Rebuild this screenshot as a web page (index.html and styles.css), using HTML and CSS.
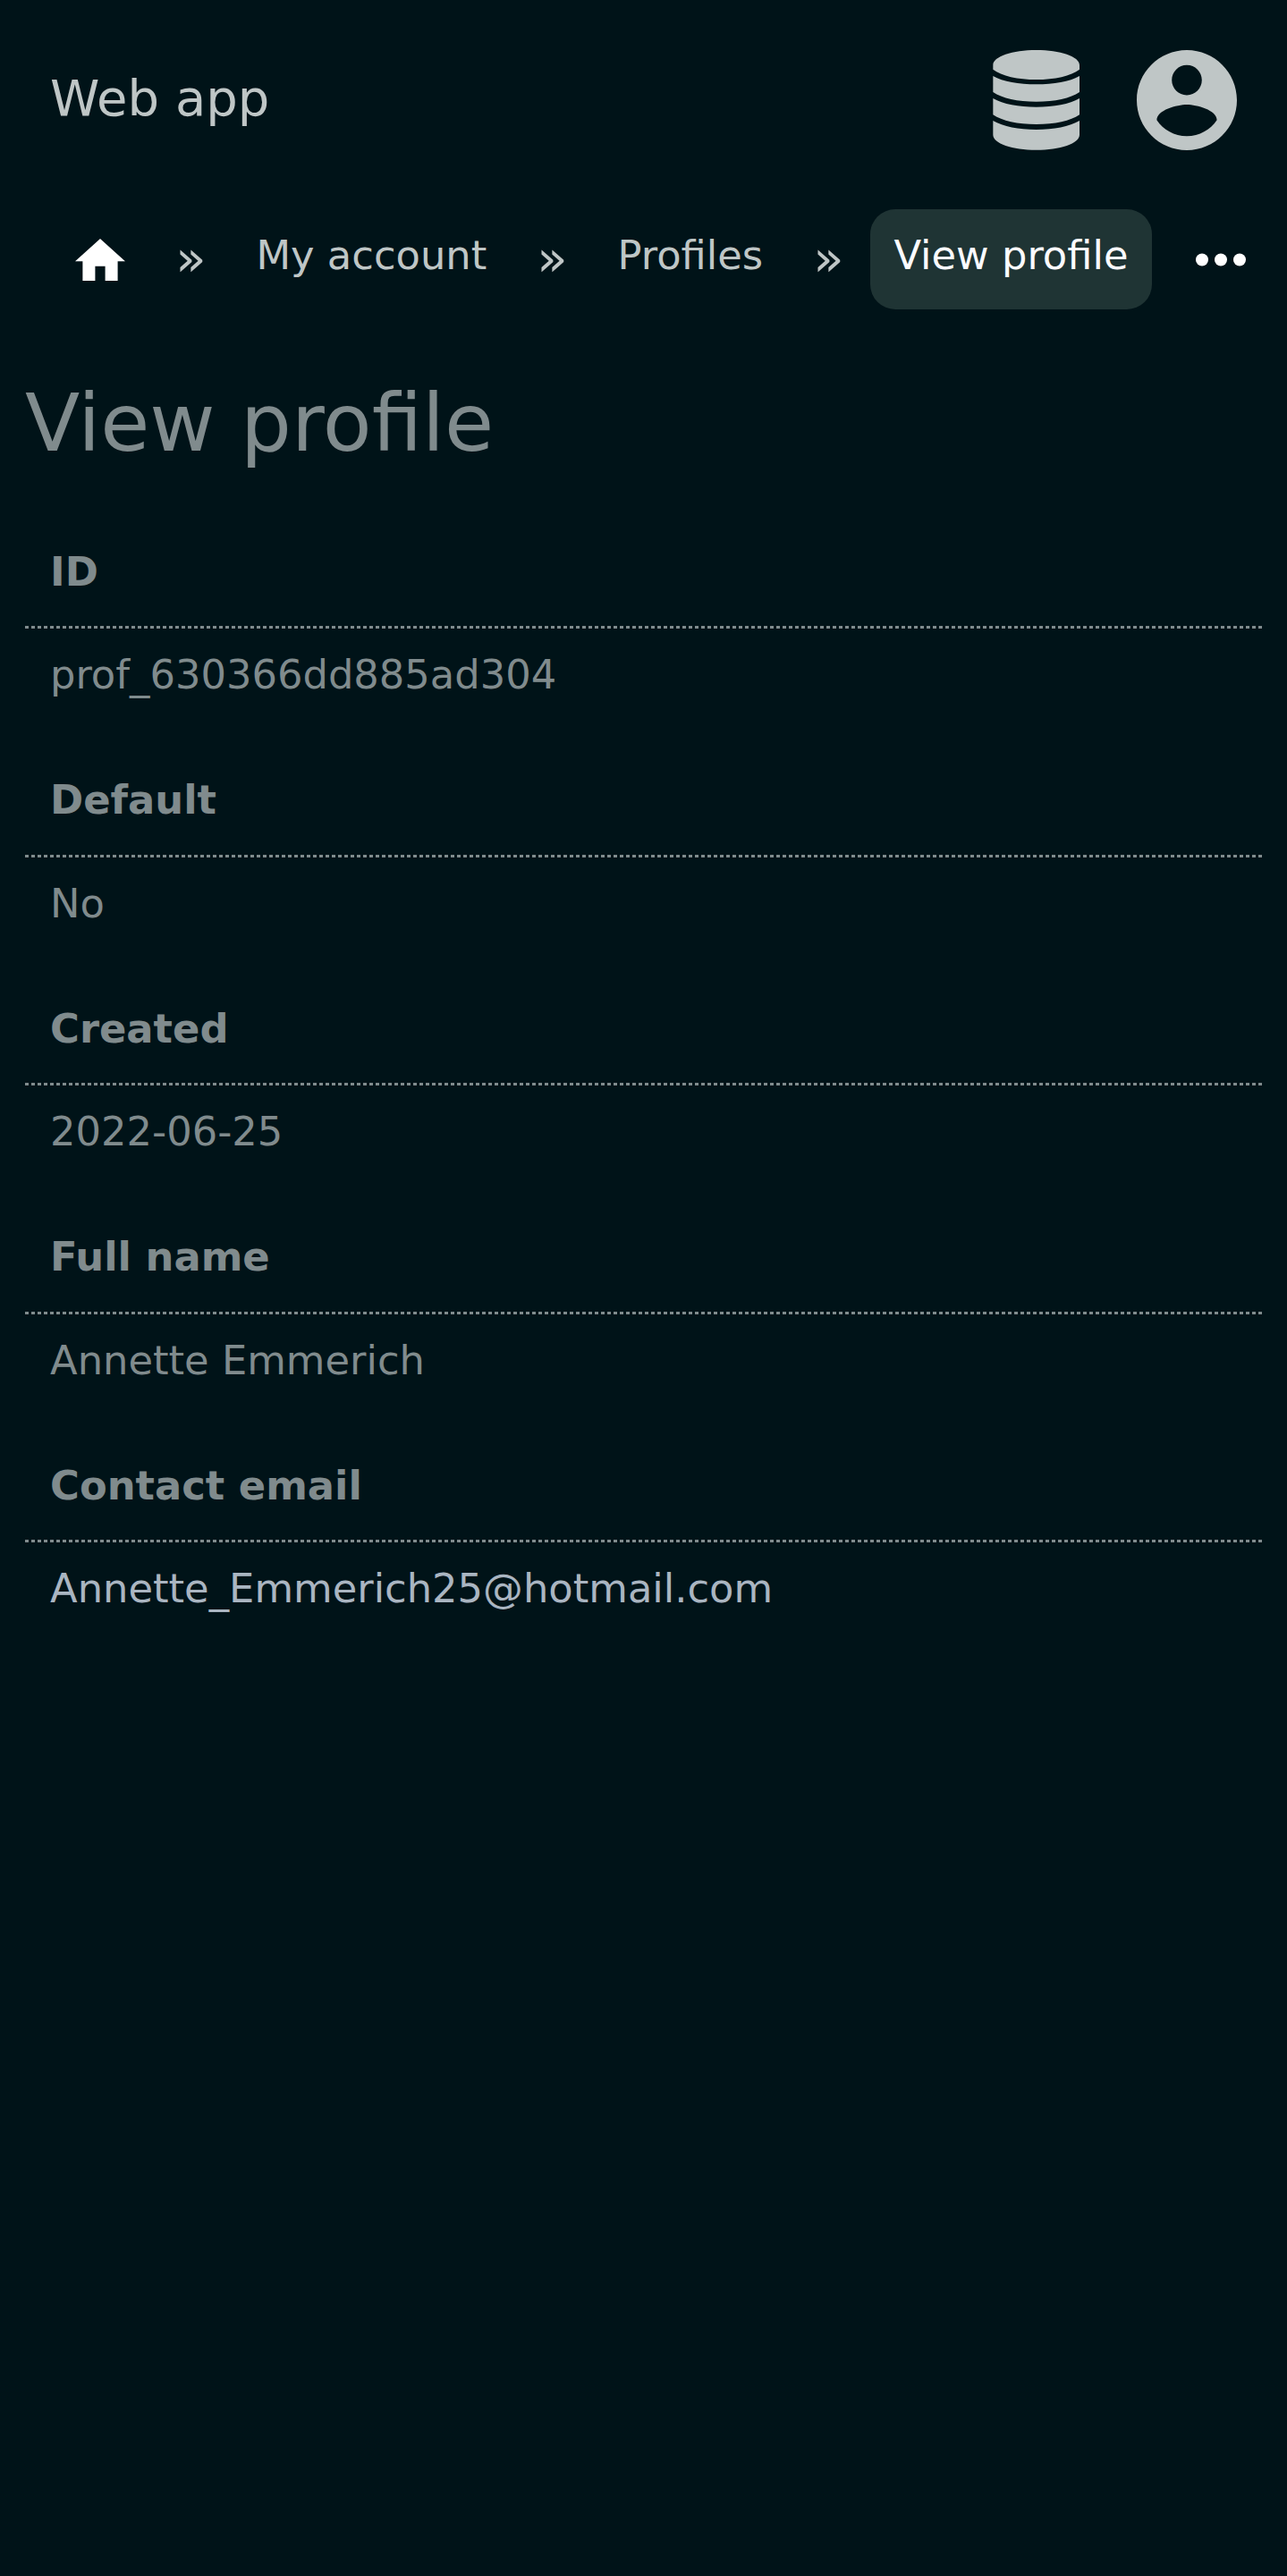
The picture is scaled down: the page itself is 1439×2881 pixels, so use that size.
FILE: index.html
```html
<!DOCTYPE html>
<html lang="en">
<head>
<meta charset="utf-8">
<title>View profile</title>
<link rel="stylesheet" href="styles.css">
</head>
<body>
<header class="topbar">
  <a class="brand">Web app</a>
  <div class="actions">
    <svg class="icon-large" viewBox="0 0 336 336"><path d="M22 50C22 22 87 0 167 0s145 22 145 50v15c-28 22-84 34-145 34S50 87 22 65zM22 87c34 19 86 28 145 28s111-9 145-28v54c-30 21-83 32-145 32S52 162 22 141zM22 162c34 20 86 29 145 29s111-9 145-29v55c-30 21-83 32-145 32S52 238 22 217zM22 237c34 20 86 30 145 30s111-10 145-30v47c0 29-65 51-145 51S22 313 22 284z"/></svg>
    <svg class="icon-large" viewBox="2 2 20 20"><path d="M12 2C6.480 2 2 6.480 2 12s4.480 10 10 10 10-4.480 10-10S17.520 2 12 2zm0 3c1.660 0 3 1.340 3 3s-1.340 3-3 3-3-1.340-3-3 1.340-3 3-3zm0 14.200c-2.500 0-4.710-1.280-6-3.220.03-1.990 4-3.080 6-3.080 1.990 0 5.970 1.090 6 3.080-1.290 1.940-3.500 3.220-6 3.220z"/></svg>
  </div>
</header>
<nav class="crumbs">
  <a class="crumb home"><svg class="home-icon" viewBox="2 3 20 17"><path d="M10 20v-6h4v6h5v-8h3L12 3 2 12h3v8z"/></svg></a>
  <span class="sep">»</span>
  <a class="crumb">My account</a>
  <span class="sep">»</span>
  <a class="crumb">Profiles</a>
  <span class="sep">»</span>
  <a class="crumb current">View profile</a>
  <svg class="more" viewBox="4 9.900 16 4.200"><circle cx="6" cy="12" r="2"/><circle cx="12" cy="12" r="2"/><circle cx="18" cy="12" r="2"/></svg>
</nav>
<main>
  <h1>View profile</h1>
  <dl>
    <dt>ID</dt><dd>prof_630366dd885ad304</dd>
    <dt>Default</dt><dd>No</dd>
    <dt>Created</dt><dd>2022-06-25</dd>
    <dt>Full name</dt><dd>Annette Emmerich</dd>
    <dt>Contact email</dt><dd><a class="email">Annette_Emmerich25@hotmail.com</a></dd>
  </dl>
</main>
</body>
</html>
```
FILE: styles.css
```css
* { box-sizing: border-box; }
body { margin: 0; min-height: 2881px; background: #001318; color: #808b8d; font: 44.8px/68px "DejaVu Sans", sans-serif; }
.topbar { height: 224px; padding: 0 56px; display: flex; justify-content: space-between; align-items: center; color: #bfc6c6; }
.brand { font-size: 56px; line-height: 84px; margin-top: -5px; }
.actions { display: flex; gap: 56px; }
.icon-large { width: 112px; height: 112px; fill: #bfc6c6; }
.crumbs { height: 132px; padding: 10.400px 0 0 58px; display: flex; align-items: flex-start; color: #bfc6c6; white-space: nowrap; }
.crumbs > * { flex-shrink: 0; }
.crumb { height: 112px; padding: 17.600px 26.200px; border-radius: 28px; }
.sep { margin: 20.600px 29.800px 0; font-size: 56px; }
.home-icon { display: block; width: 56px; height: 47.600px; margin-top: 14.900px; fill: #fff; }
.current { background: #1f3434; color: #fbfbff; }
.more { width: 56px; height: 15px; margin: 48.500px 0 0 49px; fill: #fff; }
main { padding: 49px 28px 0; }
h1 { margin: 0; font-size: 89.600px; line-height: 136px; font-weight: 400; }
dl { margin: 43px 0 0; }
dt {
  height: 119.400px;
  padding: 21.700px 28px 0;
  font-weight: 700;
  background: repeating-linear-gradient(90deg, currentColor 0 3.600px, transparent 3.600px 7px) bottom / 100% 3.400px no-repeat;
}
dd { height: 136.200px; margin: 0; padding: 17.700px 28px 0; }
.email { color: #aab5c1; }
```
